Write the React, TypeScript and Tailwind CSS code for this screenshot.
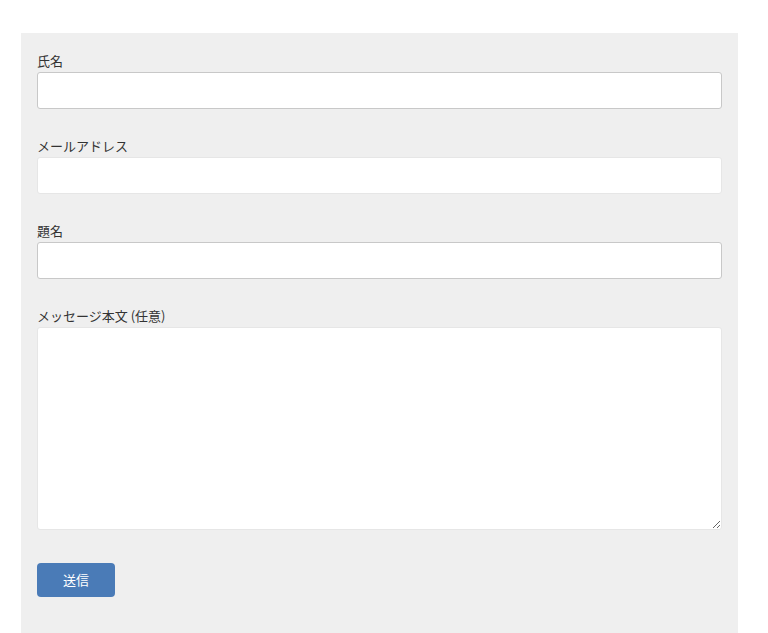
import React from "react";

export default function App() {
  const font = { fontFamily: '"Noto Sans CJK JP", "Noto Sans", sans-serif' };
  return (
    <div className="w-[768px] h-[633px] bg-white overflow-hidden" style={font}>
      <div className="ml-[21px] mt-[33px] w-[717px] h-[600px] bg-[#efefef] px-4 pt-[18px] text-[13px] text-[#333]">
        <label className="block leading-[20px] mb-px">氏名</label>
        <input className="block w-full h-[37px] bg-white border border-[#c8c8c8] rounded-[3px] outline-none" />
        <div className="h-[27px]" />
        <label className="block leading-[20px] mb-px">メールアドレス</label>
        <input type="email" className="block w-full h-[37px] bg-white border border-[#e6e6e6] rounded-[3px] outline-none" />
        <div className="h-[27px]" />
        <label className="block leading-[20px] mb-px">題名</label>
        <input className="block w-full h-[37px] bg-white border border-[#c8c8c8] rounded-[3px] outline-none" />
        <div className="h-[27px]" />
        <label className="block leading-[20px] mb-px">メッセージ本文 (任意)</label>
        <textarea className="block w-full h-[203px] bg-white border border-[#e6e6e6] rounded-[3px] outline-none" />
        <div className="h-[33px]" />
        <button className="block w-[78px] h-[34px] bg-[#4a7bb7] text-white text-[13px] rounded-[4px]">送信</button>
      </div>
    </div>
  );
}
